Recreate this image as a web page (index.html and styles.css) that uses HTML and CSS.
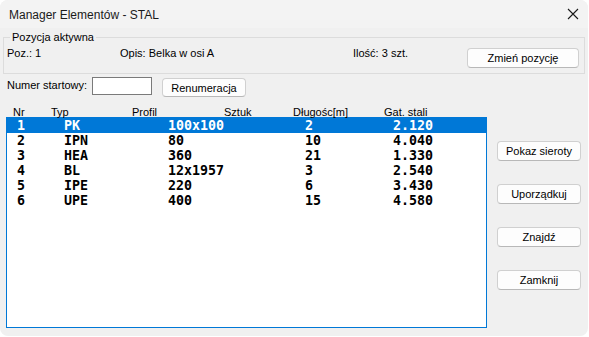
FILE: index.html
```html
<!DOCTYPE html>
<html>
<head>
  <meta charset="utf-8">
  <title>Manager Elementów - STAL</title>
  <link rel="stylesheet" href="styles.css">
</head>
<body>
  <div class="window">
    <div class="titlebar">
      <span class="title">Manager Elementów - STAL</span>
      <span class="close">
        <svg width="12" height="12" viewBox="0 0 12 12">
          <path d="M1 1 L11 11 M11 1 L1 11" stroke="#1a1a1a" stroke-width="1.1" fill="none"/>
        </svg>
      </span>
    </div>

    <fieldset class="group">
      <legend>Pozycja aktywna</legend>
      <div class="group-row">
        <span class="poz">Poz.: 1</span>
        <span class="opis">Opis: Belka w osi A</span>
        <span class="ilosc">Ilość: 3 szt.</span>
        <button class="btn btn-change">Zmień pozycję</button>
      </div>
    </fieldset>

    <div class="start-row">
      <label for="startNr">Numer startowy:</label>
      <input type="text" id="startNr" class="start-input">
      <button class="btn btn-renum">Renumeracja</button>
    </div>

    <div class="main">
      <div class="list-section">
        <div class="list-header">
          <span>Nr</span>
          <span>Typ</span>
          <span>Profil</span>
          <span>Sztuk</span>
          <span>Długośc[m]</span>
          <span>Gat. stali</span>
        </div>
        <div class="list-box">
          <div class="list-row selected">
            <span>1</span><span>PK</span><span>100x100</span><span>2</span><span>2.120</span>
          </div>
          <div class="list-row">
            <span>2</span><span>IPN</span><span>80</span><span>10</span><span>4.040</span>
          </div>
          <div class="list-row">
            <span>3</span><span>HEA</span><span>360</span><span>21</span><span>1.330</span>
          </div>
          <div class="list-row">
            <span>4</span><span>BL</span><span>12x1957</span><span>3</span><span>2.540</span>
          </div>
          <div class="list-row">
            <span>5</span><span>IPE</span><span>220</span><span>6</span><span>3.430</span>
          </div>
          <div class="list-row">
            <span>6</span><span>UPE</span><span>400</span><span>15</span><span>4.580</span>
          </div>
        </div>
      </div>

      <div class="side-buttons">
        <button class="btn btn-side">Pokaz sieroty</button>
        <button class="btn btn-side">Uporządkuj</button>
        <button class="btn btn-side">Znajdź</button>
        <button class="btn btn-side">Zamknij</button>
      </div>
    </div>
  </div>
</body>
</html>
```

FILE: styles.css
```css
body {
  margin: 0;
  background-color: #ffffff;
  font-family: "Liberation Sans", Arial, sans-serif;
  font-size: 11px;
  color: #000;
}

.window {
  width: 588px;
  height: 336px;
  background-color: #f0f0f0;
  border-radius: 8px;
  overflow: hidden;
}

.titlebar {
  height: 28px;
  display: flex;
  align-items: center;
  justify-content: space-between;
  padding: 0 8px 0 9px;
  background-color: #f3f3f3;
}

.title {
  font-size: 12px;
  color: #1a1a1a;
  margin-top: 1px;
}

.close {
  display: flex;
  margin-right: 1px;
}

/* group box */
.group {
  margin: 3px 3px 0 3px;
  padding: 0;
  height: 43px;
  border: 1px solid #dcdcdc;
  box-sizing: border-box;
}

.group legend {
  margin-left: 6px;
  padding: 0 2px;
  line-height: 13px;
}

.group-row {
  display: flex;
  align-items: flex-start;
  padding: 3px 0 0 3px;
  line-height: 13px;
}

.poz {
  width: 113px;
}

.opis {
  width: 233px;
}

.ilosc {
  width: 114px;
}

.btn {
  font-family: "Liberation Sans", Arial, sans-serif;
  font-size: 11px;
  color: #000;
  background-color: #fdfdfd;
  border: 1px solid #d0d0d0;
  border-bottom-color: #b8b8b8;
  border-radius: 4px;
  padding: 0;
  cursor: pointer;
}

.btn-change {
  width: 112px;
  height: 20px;
  margin-top: 1px;
}

/* start number row */
.start-row {
  display: flex;
  align-items: flex-start;
  margin-top: 3px;
  padding-left: 7px;
}

.start-row label {
  width: 85px;
  margin-top: 2px;
  line-height: 13px;
}

.start-input {
  width: 60px;
  height: 18px;
  box-sizing: border-box;
  border: 1px solid #7a7a7a;
  background-color: #fff;
  padding: 0;
  margin: 0;
}

.btn-renum {
  width: 84px;
  height: 19px;
  margin: 1px 0 0 10px;
}

/* list */
.main {
  display: flex;
  margin-top: 9px;
}

.list-section {
  margin-left: 6px;
}

.list-header {
  display: grid;
  grid-template-columns: 38px 81px 92px 69px 91px auto;
  padding-left: 7px;
  line-height: 12px;
  height: 11px;
}

.list-box {
  width: 481px;
  height: 211px;
  box-sizing: border-box;
  border: 1px solid #0078d7;
  background-color: #fff;
}

.list-row {
  display: grid;
  grid-template-columns: 47px 104px 137px 88px auto;
  padding-left: 10px;
  height: 15px;
  line-height: 15px;
  font-family: "DejaVu Sans Mono", "Liberation Mono", monospace;
  font-weight: bold;
  font-size: 13.3px;
  white-space: pre;
}

.list-row.selected {
  background-color: #0078d7;
  color: #fff;
}

.side-buttons {
  display: flex;
  flex-direction: column;
  gap: 23px;
  margin-left: 10px;
  padding-top: 35px;
}

.btn-side {
  width: 84px;
  height: 20px;
}
```
